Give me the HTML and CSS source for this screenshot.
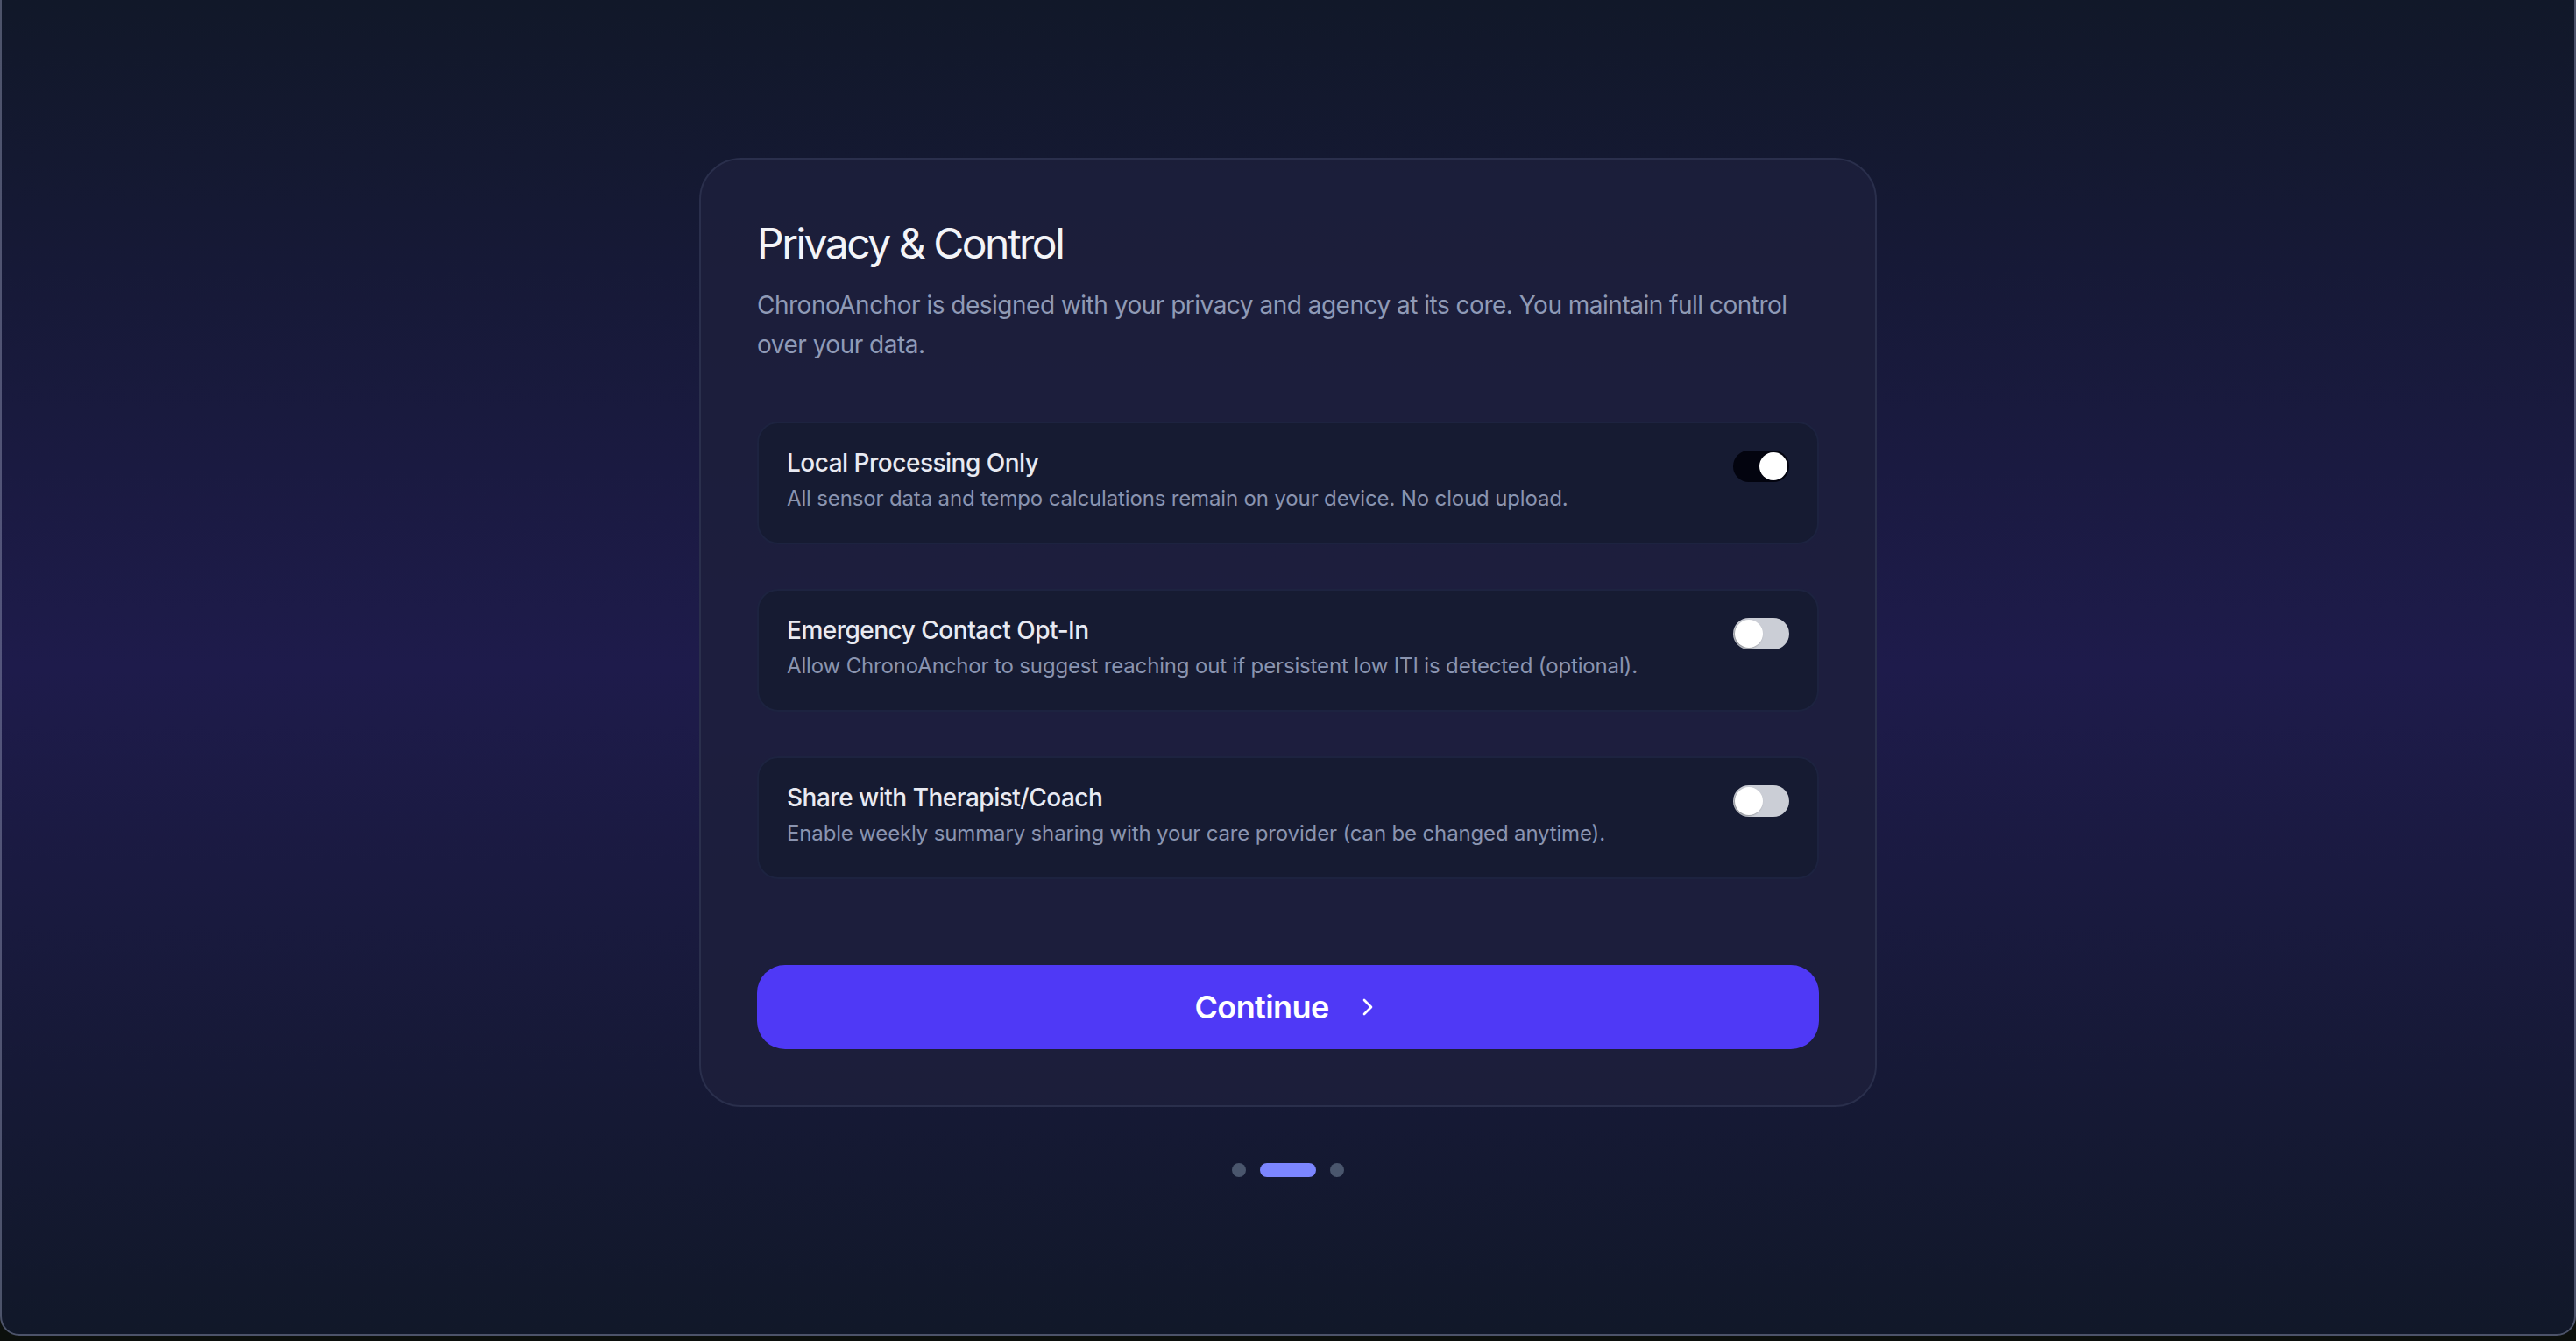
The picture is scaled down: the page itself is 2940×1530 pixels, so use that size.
FILE: index.html
```html
<!DOCTYPE html>
<html lang="en">
<head>
  <meta charset="UTF-8" />
  <meta name="viewport" content="width=device-width, initial-scale=1.0" />
  <title>ChronoAnchor - Privacy &amp; Control</title>
  <link rel="stylesheet" href="styles.css">
</head>
<body>
  <div class="window">
    <main class="stage">
      <!-- Privacy card -->
      <section class="card">
        <h1 class="card-title">Privacy &amp; Control</h1>
        <p class="card-lead">ChronoAnchor is designed with your privacy and agency at its core. You maintain full control over your data.</p>

        <div class="options">
          <div class="option">
            <div class="option-text">
              <h3>Local Processing Only</h3>
              <p>All sensor data and tempo calculations remain on your device. No cloud upload.</p>
            </div>
            <span class="toggle on"><span class="knob"></span></span>
          </div>

          <div class="option">
            <div class="option-text">
              <h3>Emergency Contact Opt-In</h3>
              <p>Allow ChronoAnchor to suggest reaching out if persistent low ITI is detected (optional).</p>
            </div>
            <span class="toggle"><span class="knob"></span></span>
          </div>

          <div class="option">
            <div class="option-text">
              <h3>Share with Therapist/Coach</h3>
              <p>Enable weekly summary sharing with your care provider (can be changed anytime).</p>
            </div>
            <span class="toggle"><span class="knob"></span></span>
          </div>
        </div>

        <button class="btn-continue">
          <span>Continue</span>
          <svg width="32" height="32" viewBox="0 0 24 24" fill="none" stroke="currentColor" stroke-width="2" stroke-linecap="round" stroke-linejoin="round"><polyline points="9 18 15 12 9 6"></polyline></svg>
        </button>
      </section>

      <!-- Step dots -->
      <div class="steps">
        <span class="dot"></span>
        <span class="dot active"></span>
        <span class="dot"></span>
      </div>
    </main>
  </div>
</body>
</html>
```

FILE: styles.css
```css
* { box-sizing: border-box; }
html, body { margin: 0; padding: 0; }
body {
  background: #0c100d;
  font-family: Inter, "Noto Sans", "Liberation Sans", sans-serif;
  height: 1530px;
  overflow: hidden;
}
.window {
  height: 1524px;
  background: linear-gradient(to bottom, #111829 0%, #1e1b4b 50%, #111829 100%);
  border: 2px solid rgba(150, 156, 185, 0.45);
  border-top: none;
  border-radius: 0 0 22px 22px;
  overflow: hidden;
}
.stage {
  height: 100%;
  display: flex;
  flex-direction: column;
  align-items: center;
  justify-content: center;
}
.card {
  width: 1344px;
  background: rgba(29, 32, 60, 0.82);
  border: 2px solid #2a2f4c;
  border-radius: 48px;
  padding: 64px;
}
.card-title {
  margin: 0 0 16px 0;
  font-size: 48px;
  line-height: 64px;
  font-weight: 400;
  color: #f3f4f8;
  letter-spacing: -2.5px;
}
.card-lead {
  margin: 0 0 64px 0;
  font-size: 28px;
  line-height: 45.5px;
  color: #8f9ab6;
  letter-spacing: -0.5px;
}
.options { display: flex; flex-direction: column; gap: 51px; }
.option {
  display: flex;
  align-items: flex-start;
  justify-content: space-between;
  background: #161b32;
  border: 2px solid #1d2340;
  border-radius: 24px;
  padding: 25px 32px 34px 32px;
}
.option-text h3 {
  margin: 0;
  font-size: 28px;
  line-height: 40px;
  font-weight: 500;
  color: #e8eaf2;
  letter-spacing: -0.5px;
}
.option-text p {
  margin: 5px 0 0 0;
  font-size: 24px;
  line-height: 32px;
  color: #8a94b0;
  letter-spacing: -0.15px;
}
.toggle {
  position: relative;
  flex: none;
  width: 64px;
  height: 36px;
  margin-top: 6px;
  border-radius: 18px;
  background: #cbced6;
}
.toggle .knob {
  position: absolute;
  top: 2px;
  left: 2px;
  width: 32px;
  height: 32px;
  border-radius: 50%;
  background: #fff;
  box-shadow: -1px 1px 2px rgba(0, 0, 0, 0.3);
}
.toggle.on { background: #03040f; }
.toggle.on .knob { left: 30px; box-shadow: none; }
.btn-continue {
  margin-top: 98px;
  width: 100%;
  height: 96px;
  display: flex;
  align-items: center;
  justify-content: center;
  gap: 28px;
  background: #4f39f6;
  color: #fff;
  border: none;
  border-radius: 32px;
  font-family: inherit;
  font-size: 36px;
  font-weight: 600;
  letter-spacing: -0.6px;
  cursor: pointer;
}
.btn-continue svg { display: block; }
.steps {
  margin-top: 64px;
  display: flex;
  gap: 16px;
}
.dot { width: 16px; height: 16px; border-radius: 8px; background: #4a566d; }
.dot.active { width: 64px; background: #7c86ff; }
```
